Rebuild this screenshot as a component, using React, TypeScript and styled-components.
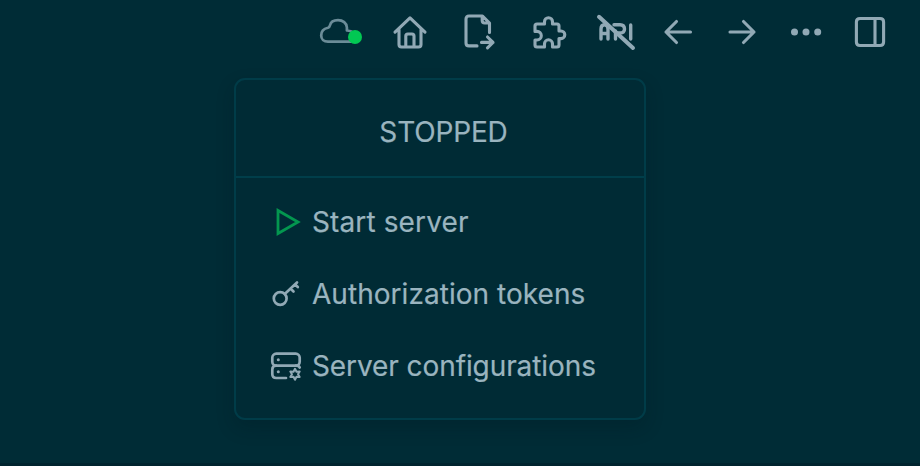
import React from "react";
import styled, { createGlobalStyle } from "styled-components";

const Global = createGlobalStyle`
  *{box-sizing:border-box}
  body{margin:0;background:#002c36}
`;
const Page = styled.main`
  width:920px;height:466px;overflow:hidden;background:#002c36;color:#9ab4bf;
  border-bottom:3px solid #00242f;
  font-family:Inter,"Liberation Sans",sans-serif;
`;
const Toolbar = styled.header`
  display:flex;height:78px;padding:12px 0 0 319px;gap:28px;
`;
const Nav = styled.nav`
  display:flex;gap:36px;
`;
const Icon = styled.svg<{ $w: number; $h?: number }>`
  display:block;flex:none;width:${p => p.$w}px;height:${p => p.$h ?? 40}px;overflow:visible;
  fill:none;stroke:#91a9b5;stroke-width:3.1;stroke-linecap:round;stroke-linejoin:round;
`;
const Menu = styled.section`
  width:412px;height:342px;margin-left:234px;border:2px solid #003c48;border-radius:11px;
  background:#002b35;box-shadow:0 8px 18px rgba(0,20,28,.24);
`;
const Status = styled.div`
  height:98px;border-bottom:2px solid #003e4a;display:flex;align-items:center;justify-content:center;
  padding:7px 0 0 7px;font-size:28px;letter-spacing:-.15px;-webkit-text-stroke:.2px currentColor;
`;
const Items = styled.ul`
  list-style:none;margin:0;padding:8px 0 0 34px;
`;
const Item = styled.li`
  height:72px;display:flex;align-items:center;gap:10px;
`;
const Label = styled.span<{ $tracking: number }>`
  white-space:nowrap;font-size:28px;line-height:36px;letter-spacing:${p => p.$tracking}px;
  -webkit-text-stroke:.2px currentColor;
`;

export default function App() {
  return (
    <>
      <Global />
      <Page>
        <Toolbar>
          <Icon $w={44} viewBox="0 0 44 40">
            <path d="M32 29.700H9C4.800 29.700 2.200 27 2.200 23.500C2.200 19.500 5 16.600 9 15.800Q10.500 15.300 11 13.200C11.700 10.200 15 8.200 19 8.200C23.800 8.200 27.700 11 27.900 15.500V18.500Q32 18.500 35 21" strokeWidth="2.700" stroke="#6b8c98" />
            <circle cx="36" cy="25" r="7" fill="#02c853" stroke="none" />
          </Icon>
          <Icon $w={38} viewBox="0 0 38 40">
            <path d="M4 20.200 19 5.800 34 20.200M8 17.500V32.500Q8 35 10.500 35H27.500Q30 35 30 32.500V17.500M14.800 34.500V24Q14.800 22 16.800 22H21Q23 22 23 24V34.500" />
          </Icon>
          <Icon $w={44} viewBox="0 0 44 40">
            <path d="M20 33.900H12Q9 33.900 9 30.900V7Q9 4 12 4H25.500L32.500 11V20.500M25.200 5V8.500Q25.200 11 27.700 11H32M24.500 30.400H36M30.500 25 36 30.400 30.500 35.800" />
          </Icon>
          <Icon $w={40} viewBox="0 0 40 40">
            <path d="M8 12H15.500V9.700A4 4 0 0 1 23.500 9.700V12H28Q30 12 30 14V19H32A3.800 3.800 0 0 1 32 26.600H30V33Q30 35 28 35H23.500V31.800A4 4 0 0 0 15.500 31.800V35H8Q6 35 6 33V28H8A4.300 4.300 0 0 0 8 19.400H6V14Q6 12 8 12Z" />
          </Icon>
          <Icon $w={39} viewBox="0 0 39 40">
            <path d="M4 27V17Q4 12.700 7.500 12.700Q11 12.700 11 17V27M4 21.500H11M18.500 27V19M17 12.700H23Q27.500 12.700 27.500 17Q27.500 21 23 21H20M33.700 13V27" strokeWidth="3.400" />
            <path d="M2 4.800 36 36" strokeWidth="4" />
          </Icon>
          <Nav>
            <Icon $w={28} viewBox="0 0 28 40"><path d="M26.500 20H2M12.500 9.500 2 20 12.500 30.500" /></Icon>
            <Icon $w={28} viewBox="0 0 28 40"><path d="M2 20H26M15.500 9.500 26 20 15.500 30.500" /></Icon>
            <Icon $w={28} viewBox="0 0 28 40"><g fill="#91a9b5" stroke="none"><circle cx="2.500" cy="20" r="3.500"/><circle cx="14" cy="20" r="3.500"/><circle cx="25.700" cy="20" r="3.500"/></g></Icon>
            <Icon $w={28} viewBox="0 0 28 40"><path d="M4 6.500H24Q27.600 6.500 27.600 10V30Q27.600 33.500 24 33.500H4Q.4 33.500.4 30V10Q.4 6.500 4 6.500M19 7V33" /></Icon>
          </Nav>
        </Toolbar>
        <Menu>
          <Status>STOPPED</Status>
          <Items>
            <Item>
              <Icon $w={32} $h={36} viewBox="0 0 32 36"><path d="M8 6.500V29.500L28 18Z" stroke="#03964f" strokeWidth="2.800" strokeLinejoin="miter" /></Icon>
              <Label $tracking={0.12}>Start server</Label>
            </Item>
            <Item>
              <Icon $w={32} $h={36} viewBox="0 0 32 36"><circle cx="10.200" cy="22.500" r="6.400" strokeWidth="2.700"/><path d="M15 17.800 27 6.500M20.500 12.500 23.500 15.500M25 8.500 27.800 11" strokeWidth="2.700" /></Icon>
              <Label $tracking={0.04}>Authorization tokens</Label>
            </Item>
            <Item>
              <Icon $w={32} $h={36} viewBox="0 0 32 36">
                <g strokeWidth="2.700"><rect x="2.300" y="5.700" width="27.400" height="12" rx="4"/><path d="M6 17.700Q2.300 17.700 2.300 21.500V26Q2.300 30 6.300 30H16M26 17.700Q29 17.700 29.700 19.500"/></g>
                <g fill="#91a9b5" stroke="none"><circle cx="8.300" cy="11.700" r="1.500"/><circle cx="8.300" cy="23.800" r="1.500"/></g>
                <path d="M25 20.800 26.500 23.700 29.700 23.500 28 26.200 29.700 29 26.500 28.800 25 31.700 23.500 28.800 20.300 29 22 26.200 20.300 23.500 23.500 23.700Z" strokeWidth="2"/>
              </Icon>
              <Label $tracking={-0.09}>Server configurations</Label>
            </Item>
          </Items>
        </Menu>
      </Page>
    </>
  );
}
